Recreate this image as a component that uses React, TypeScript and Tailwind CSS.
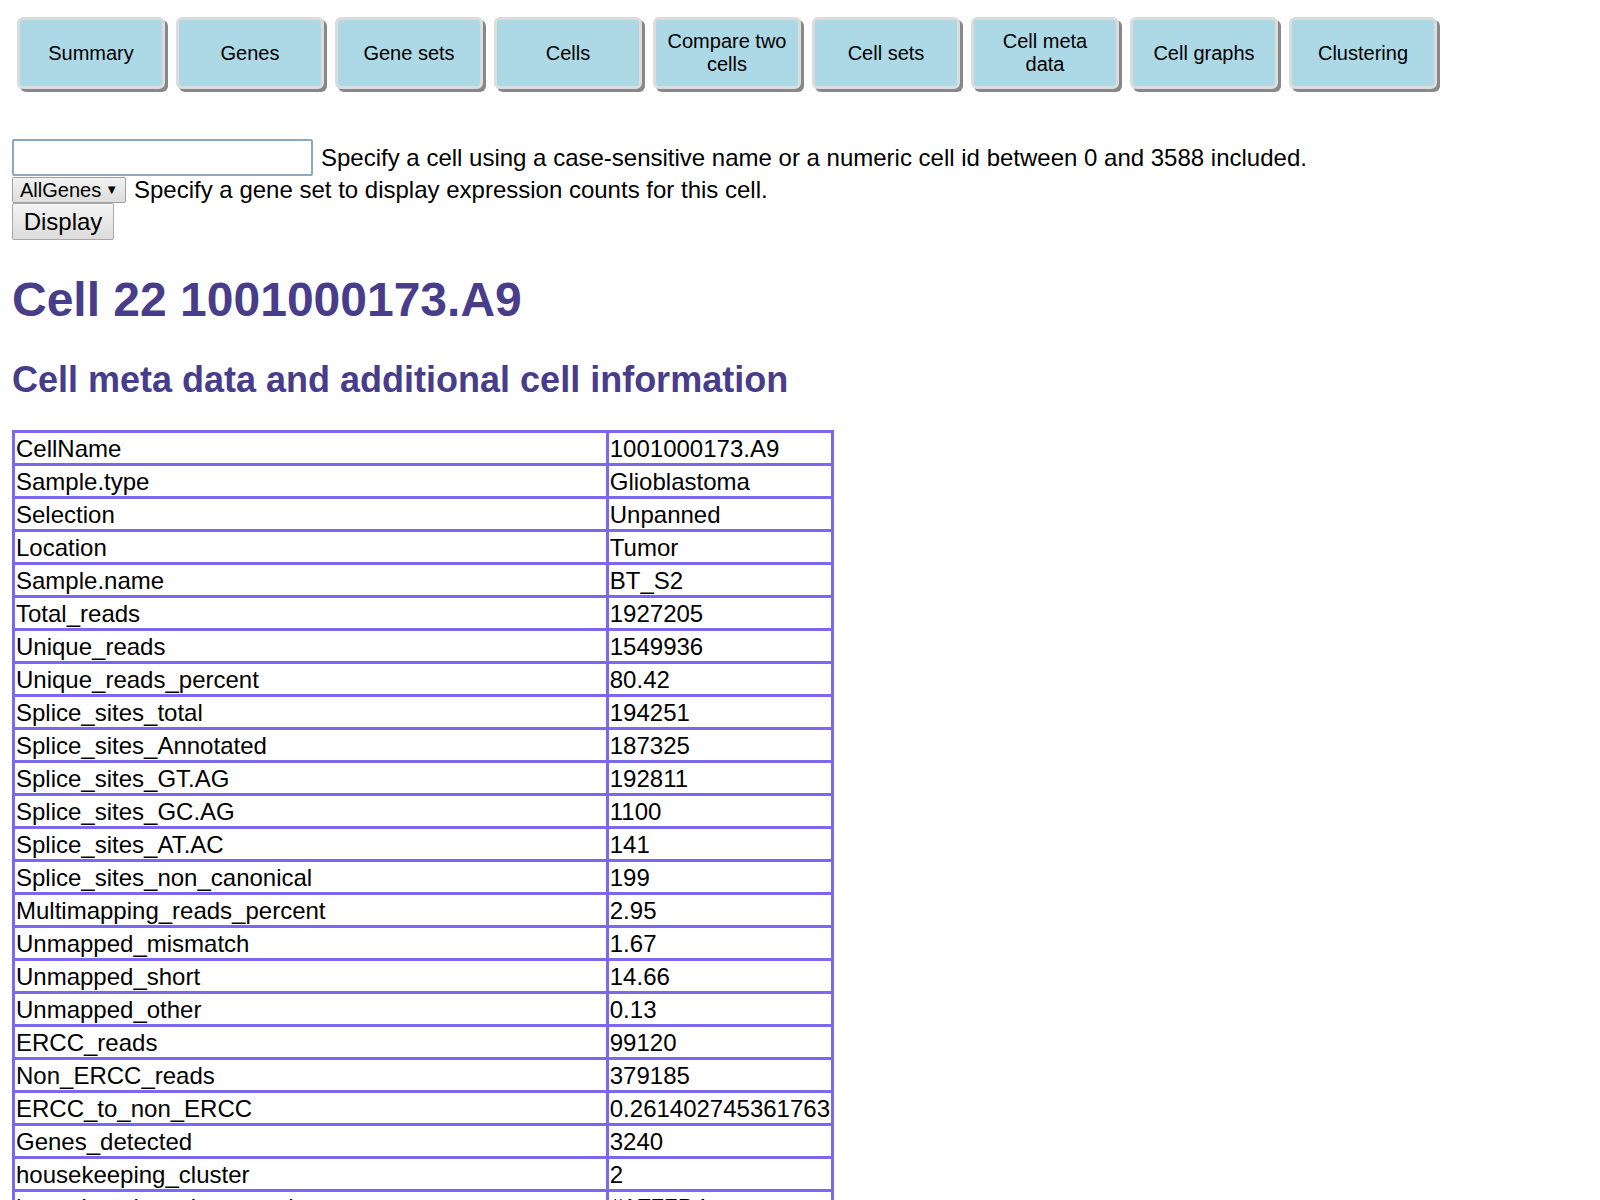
import React from 'react';

const tabs = ['Summary', 'Genes', 'Gene sets', 'Cells', 'Compare two cells', 'Cell sets', 'Cell meta data', 'Cell graphs', 'Clustering'];

const meta: [string, string][] = [
  ['CellName', '1001000173.A9'],
  ['Sample.type', 'Glioblastoma'],
  ['Selection', 'Unpanned'],
  ['Location', 'Tumor'],
  ['Sample.name', 'BT_S2'],
  ['Total_reads', '1927205'],
  ['Unique_reads', '1549936'],
  ['Unique_reads_percent', '80.42'],
  ['Splice_sites_total', '194251'],
  ['Splice_sites_Annotated', '187325'],
  ['Splice_sites_GT.AG', '192811'],
  ['Splice_sites_GC.AG', '1100'],
  ['Splice_sites_AT.AC', '141'],
  ['Splice_sites_non_canonical', '199'],
  ['Multimapping_reads_percent', '2.95'],
  ['Unmapped_mismatch', '1.67'],
  ['Unmapped_short', '14.66'],
  ['Unmapped_other', '0.13'],
  ['ERCC_reads', '99120'],
  ['Non_ERCC_reads', '379185'],
  ['ERCC_to_non_ERCC', '0.261402745361763'],
  ['Genes_detected', '3240'],
  ['housekeeping_cluster', '2'],
  ['housekeeping_cluster_color', '#1F77B4'],
];

export default function App() {
  return (
    <div className="min-h-screen bg-white text-black font-['Liberation_Sans',Arial,sans-serif]">
      {/* Top navigation */}
      <div className="flex gap-[11px] pl-[17px] pt-[17px]">
        {tabs.map((t) => (
          <button
            key={t}
            className="w-[148px] h-[72px] rounded-[6px] border-[3px] border-[#dcdcdc] shadow-[3px_3px_0_#888888] bg-[#add8e6] text-[20px] leading-[23px] text-black px-[8px]"
          >
            {t}
          </button>
        ))}
      </div>

      <div className="pl-[12px] mt-[50px]">
        <div className="flex items-center h-[37px]">
          <input
            type="text"
            className="w-[301px] h-[37px] border-[2px] border-[#8aaac4] rounded-[2px] outline-none px-[3px] text-[20px]"
          />
          <span className="ml-[8px] text-[24px]">
            Specify a cell using a case-sensitive name or a numeric cell id between 0 and 3588 included.
          </span>
        </div>
        <div className="flex items-center h-[27px]">
          <div className="flex items-center justify-between w-[114px] h-[26px] border border-[#a0a0a0] rounded-[2px] bg-gradient-to-b from-[#f2f2f2] to-[#dddddd] px-[7px] text-[20px] leading-[24px]">
            <span>AllGenes</span>
            <span className="text-[13px]">▼</span>
          </div>
          <span className="ml-[8px] text-[24px]">Specify a gene set to display expression counts for this cell.</span>
        </div>
        <button className="w-[102px] h-[37px] border-[1.5px] border-[#a8a8a8] rounded-[2px] bg-gradient-to-b from-[#f4f4f4] to-[#dcdcdc] text-[24px] leading-[28px] text-black">
          Display
        </button>

        <h1 className="mt-[32px] mb-[32px] text-[48px] leading-[55px] font-bold text-[#483d8b]">Cell 22 1001000173.A9</h1>
        <h2 className="mb-[30px] text-[36px] leading-[41px] font-bold text-[#483d8b]">
          Cell meta data and additional cell information
        </h2>

        <table className="border-collapse text-[24px] w-[822px]">
          <tbody>
            {meta.map(([k, v]) => (
              <tr key={k}>
                <td className="w-[595px] border-[3px] border-[#7b68ee] px-[1px] py-[1.5px] leading-[27px] align-middle">{k}</td>
                <td className="border-[3px] border-[#7b68ee] px-[1px] py-[1.5px] leading-[27px] align-middle">{v}</td>
              </tr>
            ))}
          </tbody>
        </table>
      </div>
    </div>
  );
}
